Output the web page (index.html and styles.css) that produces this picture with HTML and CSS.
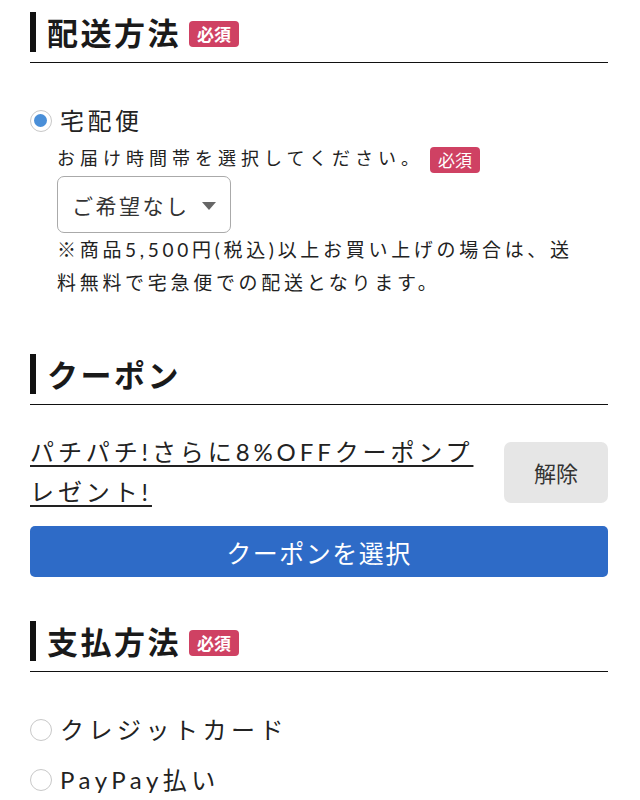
FILE: index.html
```html
<!DOCTYPE html>
<html lang="ja">
<head>
    <meta charset="UTF-8">
    <meta name="viewport" content="width=device-width, initial-scale=1.0">
    <title>お支払い</title>
    <link rel="stylesheet" href="styles.css">
</head>
<body>
    <section class="section">
        <div class="section-head">
            <h2>配送方法 <span class="badge">必須</span></h2>
        </div>
        <div class="delivery">
            <label class="radio-row">
                <span class="radio checked"></span>宅配便
            </label>
            <div class="delivery-detail">
                <p class="time-label">お届け時間帯を選択してください。<span class="badge small">必須</span></p>
                <div class="select">ご希望なし<span class="caret"></span></div>
                <p class="note">※商品5,500円(税込)以上お買い上げの場合は、送料無料で宅急便での配送となります。</p>
            </div>
        </div>
    </section>

    <section class="section coupon-section">
        <div class="section-head">
            <h2>クーポン</h2>
        </div>
        <div class="coupon-row">
            <a href="#" class="coupon-link">パチパチ!さらに8%OFFクーポンプレゼント!</a>
            <button class="cancel-button">解除</button>
        </div>
        <button class="coupon-button">クーポンを選択</button>
    </section>

    <section class="section pay-section">
        <div class="section-head">
            <h2>支払方法 <span class="badge">必須</span></h2>
        </div>
        <div class="pay-list">
            <label class="radio-row pay"><span class="radio"></span>クレジットカード</label>
            <label class="radio-row pay"><span class="radio"></span>PayPay払い</label>
        </div>
    </section>
</body>
</html>
```

FILE: styles.css
```css
* {
    margin: 0;
    padding: 0;
    box-sizing: border-box;
    font-family: 'Lato', 'Noto Sans CJK JP', sans-serif;
}

body {
    background-color: #fff;
    color: #222;
    padding: 12px 32px 0 30px;
}

.section-head {
    border-bottom: 1.5px solid #111;
    padding-bottom: 10px;
}

.section-head h2 {
    display: flex;
    align-items: center;
    gap: 8px;
    border-left: 6px solid #111;
    padding-left: 11px;
    font-size: 31px;
    font-weight: 700;
    line-height: 40px;
    letter-spacing: 2.5px;
    color: #1a1a1a;
    font-family: 'Noto Sans CJK JP', sans-serif;
}

.badge {
    display: inline-block;
    background-color: #cf4163;
    color: #fff;
    font-size: 17px;
    font-weight: 700;
    line-height: 26px;
    letter-spacing: 0;
    padding: 0 8px;
    border-radius: 4px;
    margin-top: 4px;
    font-family: 'Noto Sans CJK JP', sans-serif;
}

.badge.small {
    font-weight: 400;
    margin-left: 6px;
    margin-top: 0;
    vertical-align: middle;
}

.delivery {
    margin-top: 42px;
}

.radio-row {
    display: flex;
    align-items: center;
    font-size: 24px;
    line-height: 32px;
    letter-spacing: 3.5px;
    color: #222;
}

.radio {
    width: 22px;
    height: 22px;
    border: 1.5px solid #c8c8c8;
    border-radius: 50%;
    margin-right: 8px;
    position: relative;
    flex-shrink: 0;
}

.radio.checked::after {
    content: '';
    position: absolute;
    top: 3px;
    left: 3px;
    width: 13px;
    height: 13px;
    border-radius: 50%;
    background-color: #4a8fd8;
}

.delivery-detail {
    padding-left: 27px;
}

.time-label {
    font-size: 18px;
    line-height: 26px;
    letter-spacing: 5px;
    margin-top: 8px;
}

.select {
    display: inline-flex;
    align-items: center;
    height: 57px;
    margin-top: 3px;
    padding: 0 14px 0 14px;
    border: 1.5px solid #aaa;
    border-radius: 7px;
    font-size: 21px;
    letter-spacing: 2.5px;
    color: #333;
}

.caret {
    width: 0;
    height: 0;
    border-left: 7px solid transparent;
    border-right: 7px solid transparent;
    border-top: 8px solid #666;
    margin-left: 12px;
    margin-top: 3px;
}

.note {
    font-size: 19px;
    line-height: 33px;
    letter-spacing: 3.7px;
    width: 530px;
}

.coupon-section {
    margin-top: 55px;
}

.coupon-row {
    display: flex;
    align-items: center;
    justify-content: space-between;
    margin-top: 27px;
}

.coupon-link {
    width: 452px;
    font-size: 24px;
    line-height: 40px;
    letter-spacing: 3.9px;
    color: #222;
    text-decoration: underline;
    text-underline-offset: 4px;
    text-decoration-thickness: 1.5px;
}

.cancel-button {
    width: 104px;
    height: 61px;
    background-color: #e6e6e6;
    border: none;
    border-radius: 7px;
    font-size: 22px;
    color: #333;
    font-family: 'Noto Sans CJK JP', sans-serif;
}

.coupon-button {
    display: block;
    width: 100%;
    height: 51px;
    margin-top: 14px;
    background-color: #2e6bc7;
    color: #fff;
    border: none;
    border-radius: 5px;
    font-size: 25px;
    letter-spacing: 1.5px;
    font-family: 'Noto Sans CJK JP', sans-serif;
}

.pay-section {
    margin-top: 44px;
}

.pay-list {
    margin-top: 33px;
}

.radio-row.pay {
    line-height: 50px;
    letter-spacing: 4.5px;
}
```
